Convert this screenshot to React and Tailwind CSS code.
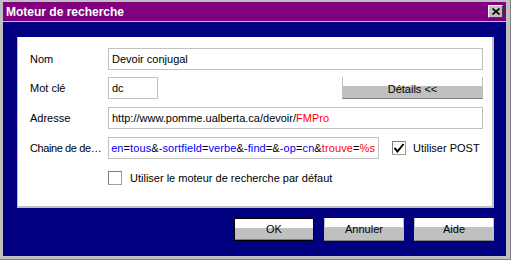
import { useState } from 'react';

const bouton =
  'flex items-center justify-center text-[11px] text-black bg-[linear-gradient(to_bottom,#ffffff_0%,#ffffff_43%,#c0c0c0_43%,#c0c0c0_100%)]';

function Case({ coche, onClick }) {
  return (
    <div
      onClick={onClick}
      className="w-[14px] h-[14px] bg-white border border-[#a0a0a0] border-t-[#808080] border-l-[#808080] flex items-center justify-center shrink-0"
    >
      {coche && (
        <svg width="12" height="12" viewBox="0 0 12 12">
          <polyline points="1.5,6 4.5,9.5 10.5,2" fill="none" stroke="#000" strokeWidth="2" />
        </svg>
      )}
    </div>
  );
}

export default function App() {
  const [post, setPost] = useState(true);
  const [defaut, setDefaut] = useState(false);

  return (
    <div className="w-[511px] h-[260px] bg-[#c0c0c0] pt-[2px] pl-[3px] pr-[5px] pb-[4px] flex flex-col font-['Liberation_Sans',Arial,sans-serif] shadow-[inset_-1px_-1px_0_#808080]">
      {/* barre de titre */}
      <div className="h-[19px] bg-[#800080] flex items-center justify-between pl-[3px] pr-[3px] shrink-0">
        <span className="text-white font-bold text-[12px] leading-none">Moteur de recherche</span>
        <div className="w-[15px] h-[13px] bg-[#c0c0c0] border border-white border-r-[#404040] border-b-[#404040] flex items-center justify-center">
          <svg width="8" height="7" viewBox="0 0 8 7">
            <path d="M0.5 0.5 L7.5 6.5 M7.5 0.5 L0.5 6.5" stroke="#000" strokeWidth="1.6" />
          </svg>
        </div>
      </div>

      <div className="mt-px flex-1 bg-[#000080] pl-[14px] pr-[12px] pt-[15px]">
        {/* panneau blanc */}
        <div className="h-[171px] bg-white border-l border-r-2 border-b-2 border-[#c0c0c0] pl-[12px] pr-[9px] pt-[11px] text-[11px] text-black">
          <div className="flex items-center h-[22px]">
            <span className="w-[78px]">Nom</span>
            <div className="flex-1 h-full border border-[#c0c0c0] flex items-center pl-[3px]">Devoir conjugal</div>
          </div>

          <div className="flex items-center h-[22px] mt-[7px]">
            <span className="w-[78px]">Mot clé</span>
            <div className="w-[50px] h-full border border-[#c0c0c0] flex items-center pl-[3px]">dc</div>
            <div className="flex-1" />
            <div className={`${bouton} w-[141px] h-full border-x border-[#c0c0c0] border-b border-b-[#808080] pt-[3px]`}>
              Détails &lt;&lt;
            </div>
          </div>

          <div className="flex items-center h-[22px] mt-[8px]">
            <span className="w-[78px]">Adresse</span>
            <div className="flex-1 h-full border border-[#c0c0c0] flex items-center pl-[3px] whitespace-nowrap">
              http://www.pomme.ualberta.ca/devoir/<span className="text-[#ff0000]">FMPro</span>
            </div>
          </div>

          <div className="flex items-center h-[22px] mt-[8px]">
            <span className="w-[78px] shrink-0 whitespace-nowrap tracking-[-0.4px]">Chaine de de…</span>
            <div className="w-[271px] h-full border border-[#c0c0c0] flex items-center justify-end pr-[3px] whitespace-nowrap tracking-[0.1px]">
              <span>
                <span className="text-[#0000ff]">en</span>
                <span>=</span>
                <span className="text-[#0000ff]">tous</span>
                <span>&amp;</span>
                <span className="text-[#0000ff]">-sortfield</span>
                <span>=</span>
                <span className="text-[#0000ff]">verbe</span>
                <span>&amp;</span>
                <span className="text-[#0000ff]">-find</span>
                <span>=&amp;</span>
                <span className="text-[#0000ff]">-op</span>
                <span>=</span>
                <span className="text-[#0000ff]">cn</span>
                <span>&amp;</span>
                <span className="text-[#ff0000]">trouve</span>
                <span>=</span>
                <span className="text-[#ff0000]">%s</span>
              </span>
            </div>
            <div className="ml-[13px]">
              <Case coche={post} onClick={() => setPost(!post)} />
            </div>
            <span className="ml-[7px]">Utiliser POST</span>
          </div>

          <div className="flex items-center h-[14px] mt-[12px] pl-[78px]">
            <Case coche={defaut} onClick={() => setDefaut(!defaut)} />
            <span className="ml-[8px]">Utiliser le moteur de recherche par défaut</span>
          </div>
        </div>

        {/* boutons */}
        <div className="mt-[10px] flex justify-end gap-[10px]">
          <div className={`${bouton} w-[80px] h-[23px] border border-black shadow-[inset_0_-1px_0_#808080]`}>OK</div>
          <div className={`${bouton} w-[80px] h-[23px] border-x border-[#c0c0c0] border-b border-b-[#808080]`}>Annuler</div>
          <div className={`${bouton} w-[80px] h-[23px] border-x border-[#c0c0c0] border-b border-b-[#808080]`}>Aide</div>
        </div>
      </div>
    </div>
  );
}
